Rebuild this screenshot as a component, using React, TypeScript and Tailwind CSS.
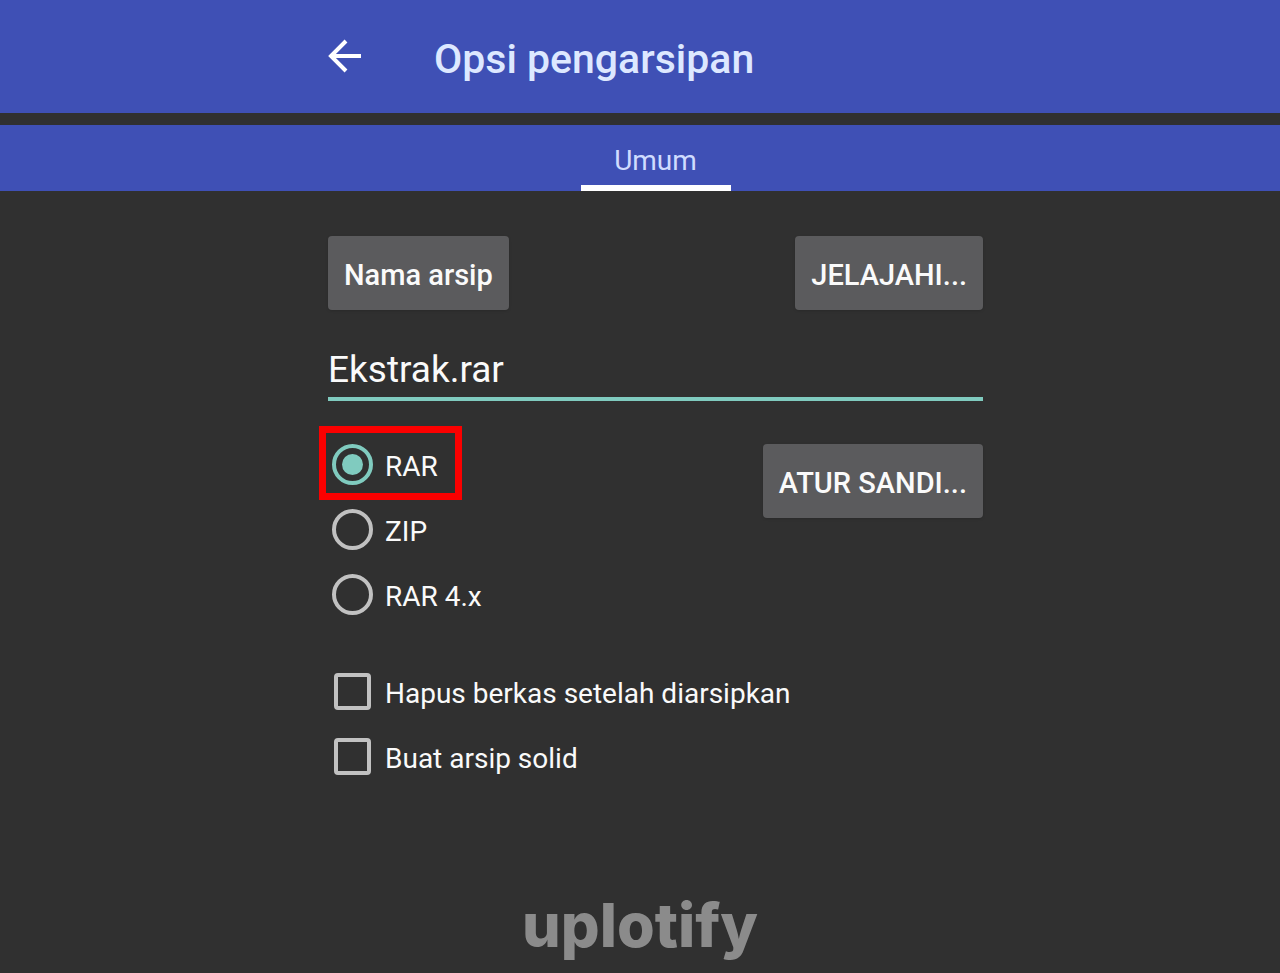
import { useState } from 'react';

const formats = ['RAR', 'ZIP', 'RAR 4.x'];
const options = ['Hapus berkas setelah diarsipkan', 'Buat arsip solid'];

const column = 'mx-auto w-full max-w-[686px] pl-[31px]';
const button =
  'flex h-[74px] items-center justify-center rounded-[4px] bg-[#5b5b5d] px-4 pt-1 text-[29px] leading-8 font-medium text-[#fafafa] shadow-sm';

export default function App() {
  const [format, setFormat] = useState('RAR');
  const [name, setName] = useState('Ekstrak.rar');

  return (
    <div className="flex min-h-screen flex-col bg-[#303030] font-['Roboto',sans-serif] text-[#fafafa]">
      <header className="bg-[#3f50b5]">
        <div className={column}>
          <div className="flex h-[113px] items-center">
            <button type="button" aria-label="Kembali" className="mr-[72px] pb-px text-white">
              <svg viewBox="0 0 34 34" className="h-[34px] w-[34px]" fill="none" stroke="currentColor" strokeWidth="4">
                <path d="M33 17H4M18 2L3 17L18 32" />
              </svg>
            </button>
            <h1 className="pt-1 text-[41px] leading-[48px] font-medium text-[#dde8ff]">Opsi pengarsipan</h1>
          </div>
        </div>
      </header>

      <nav className="mt-3 bg-[#3f50b5]">
        <div className={column}>
          <div className="flex justify-center">
            <a
              href="#umum"
              aria-current="page"
              className="flex h-[66px] w-[150px] items-center justify-center border-b-[6px] border-white pt-3 text-[28px] leading-8 text-[#cfdcff]"
            >
              Umum
            </a>
          </div>
        </div>
      </nav>

      <main id="umum" className="flex-1">
        <form className={column} onSubmit={(e) => e.preventDefault()}>
          <div className="flex justify-between pt-[45px]">
            <button type="button" className={button}>Nama arsip</button>
            <button type="button" className={button}>JELAJAHI...</button>
          </div>

          <input
            type="text"
            aria-label="Nama arsip"
            value={name}
            onChange={(e) => setName(e.target.value)}
            className="mt-[31px] block h-[60px] w-full border-b-4 border-[#80cbbf] bg-transparent text-[37px] leading-[44px] outline-none"
          />

          <div className="mt-[31px] flex items-start justify-between">
            <div role="radiogroup" aria-label="Format arsip" className="flex flex-col items-start">
              {formats.map((item) => (
                <label key={item} className="relative flex h-[65px] items-center gap-3 pl-1 text-[28px] leading-8">
                  <input
                    type="radio"
                    name="format"
                    checked={format === item}
                    onChange={() => setFormat(item)}
                    className="grid h-[41px] w-[41px] appearance-none place-content-center rounded-full border-4 border-[#c1c1c1] before:h-[21px] before:w-[21px] before:rounded-full checked:border-[#80cbbf] checked:before:bg-[#80cbbf]"
                  />
                  <span className="pt-1">{item}</span>
                  {item === 'RAR' && (
                    <span className="pointer-events-none absolute -top-[6px] -right-6 -bottom-[3px] -left-[9px] border-[7px] border-[#fb0000]" />
                  )}
                </label>
              ))}
            </div>
            <button type="button" className={`mt-3 ${button}`}>ATUR SANDI...</button>
          </div>

          <div className="mt-8 flex flex-col items-start">
            {options.map((item) => (
              <label key={item} className="flex h-[65px] items-center gap-[14px] pl-[6px] text-[28px] leading-8">
                <input type="checkbox" className="h-[37px] w-[37px] appearance-none rounded-[4px] border-4 border-[#c1c1c1] checked:bg-[#80cbbf]" />
                <span className="pt-1">{item}</span>
              </label>
            ))}
          </div>
        </form>
      </main>

      <footer className="pb-3 text-center font-['Inter',sans-serif] text-[61px] leading-[72px] font-extrabold text-[#8b8b8b]">
        uplotify
      </footer>
    </div>
  );
}
